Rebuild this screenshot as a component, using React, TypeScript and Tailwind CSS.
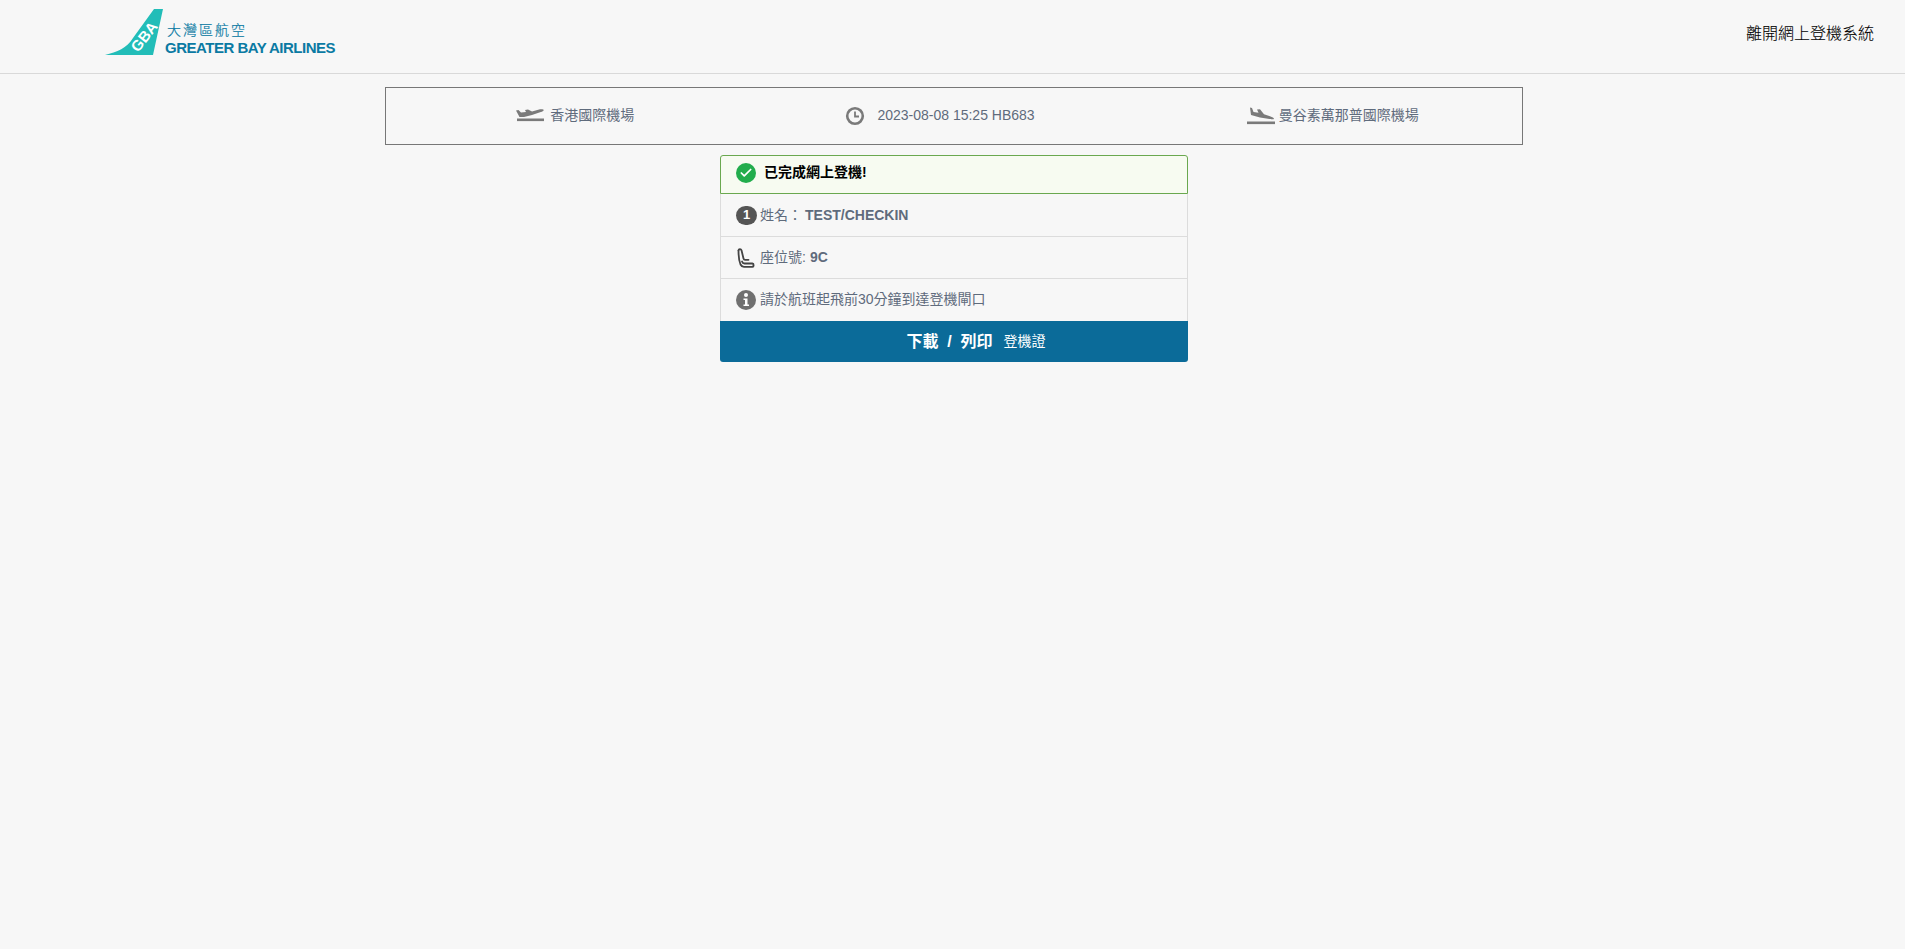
import React from "react";
import { Check } from "lucide-react";

function Logo() {
  return (
    <div className="flex items-end">
      <svg width="60" height="47" viewBox="0 0 60 47" className="block">
        <path d="M49 0H58L48 46H0C12 43 22 39 28 29Z" fill="#22bdb8" />
        <text
          x="0"
          y="0"
          transform="translate(33 44) rotate(-52)"
          fill="#fff"
          fontSize="15"
          fontWeight="700"
          fontFamily="'Liberation Sans', sans-serif"
        >
          GBA
        </text>
      </svg>
      <div className="flex flex-col -translate-y-[1px] text-[#0b7aa3]">
        <span className="text-[14px] leading-[18px] tracking-[2px] pl-[2px] pb-[2px] font-light [-webkit-text-stroke:0.2px_#0b7aa3] font-['Noto_Sans_CJK_TC',sans-serif]">大灣區航空</span>
        <span className="text-[15px] leading-[15px] font-bold font-['Liberation_Sans',sans-serif] tracking-[-0.5px]">GREATER BAY AIRLINES</span>
      </div>
    </div>
  );
}

function Takeoff() {
  return (
    <svg width="28" height="14" viewBox="0 0 28 14" className="block" fill="#7a7a7a">
      <path d="M0 1.5L2.5 1l2.5 2.5 5-.5-1-2 3-.5 4 2L24 .3c1.8-.3 3.7 0 3.8.6.1.7-1.2 1.5-3 2.2L16 6 8 8H3.5z" />
      <rect x="1" y="9.5" width="27" height="2.6" />
    </svg>
  );
}

function Landing() {
  return (
    <svg width="28" height="18" viewBox="0 0 28 18" className="block" fill="#7a7a7a">
      <path d="M3 0.5L5 1l1.500 4 5 .8L10 2.500l3-.3 4 5 6 2c2.500.8 4 1.800 4 2.500 0 .6-2 .7-4.500.4L13 10.500 4 8z" />
      <rect x="0" y="14.500" width="28" height="2.600" />
    </svg>
  );
}

function Clock() {
  return (
    <svg width="20" height="20" viewBox="0 0 20 20" className="block" fill="none" stroke="#7a7a7a">
      <circle cx="10" cy="10" r="7.8" strokeWidth="2.6" />
      <path d="M10 5.5V10.5H14" strokeWidth="1.8" />
    </svg>
  );
}

function Seat() {
  return (
    <svg width="18" height="20" viewBox="0 0 18 20" className="block" fill="none" stroke="#444" strokeWidth="1.8" strokeLinejoin="round" strokeLinecap="round">
      <path d="M1.500 2.500C1.700.8 4 .8 4.500 2.300L6.500 10.500C6.700 11.300 7.200 11.800 8 11.800H11.500" />
      <path d="M1.500 2.500C1.500 7 2 13 3.500 16.500C4.200 18 5.200 18.800 7 18.800H15.500C17 18.800 17 15.500 15.500 15.500H7.500C6 15.500 5.400 14.800 5 13.500" />
    </svg>
  );
}

function Info() {
  return (
    <svg width="20" height="20" viewBox="0 0 20 20" className="block">
      <circle cx="10" cy="10" r="10" fill="#707070" />
      <circle cx="10" cy="5" r="2" fill="#fff" />
      <path d="M7.500 8.500H11.500V14.500H13V16H7.500V14.500H9V10H7.500Z" fill="#fff" />
    </svg>
  );
}

export default function App() {
  return (
    <div className="min-h-[949px] bg-[#f7f7f7] text-[14px] text-[#5f6b7c] font-['Liberation_Sans','Noto_Sans_CJK_TC',sans-serif]">
      <header className="h-[74px] flex justify-between border-b border-[#d9d9d9] pl-[105px] pr-[31px]">
        <div className="pt-[9px]">
          <Logo />
        </div>
        <a className="mt-[23px] text-[16px] leading-[22px] font-light [-webkit-text-stroke:0.1px_#000] text-black">離開網上登機系統</a>
      </header>

      <main className="pl-[3px]">
        <div className="mx-auto mt-[13px] w-[1138px] h-[58px] border border-[#777] grid grid-cols-3 items-center">
          <div className="flex items-center justify-center gap-[6px]">
            <Takeoff />
            <span className="pb-[2px]">香港國際機場</span>
          </div>
          <div className="flex items-center justify-center gap-[12px] pr-[28px]">
            <Clock />
            <span className="pb-[2px]">2023-08-08 15:25 HB683</span>
          </div>
          <div className="flex items-center justify-center gap-[4px]">
            <Landing />
            <span className="pb-[2px]">曼谷素萬那普國際機場</span>
          </div>
        </div>

        <div className="mx-auto mt-[10px] w-[468px]">
          <div className="h-[39px] flex items-center gap-[8px] pl-[15px] pb-[4px] bg-[#f7fbf1] border border-[#6aa84f] rounded-t-[3px] text-black font-bold">
            <span className="w-[20px] h-[20px] rounded-full bg-[#22ad4c] flex items-center justify-center">
              <Check size={14} strokeWidth={3} color="#fff" />
            </span>
            <span>已完成網上登機!</span>
          </div>
          <div className="border-x border-[#dcdcdc]">
            <div className="h-[43px] flex items-center pl-[15px] border-b border-[#dcdcdc]">
              <span className="w-[21px] h-[19px] rounded-full bg-[#555] text-white text-[13px] font-bold flex items-center justify-center mr-[3px]">1</span>
              <span>姓名：</span>
              <b className="ml-[3px]">TEST/CHECKIN</b>
            </div>
            <div className="h-[42px] flex items-center pl-[16px] border-b border-[#dcdcdc]">
              <span className="mr-[5px]"><Seat /></span>
              <span>座位號: </span>
              <b className="ml-[4px]">9C</b>
            </div>
            <div className="h-[42px] flex items-center gap-[4px] pl-[15px] pb-[1px]">
              <Info />
              <span>請於航班起飛前30分鐘到達登機閘口</span>
            </div>
          </div>
          <button className="w-full h-[41px] pl-[44px] bg-[#0b6b99] text-white rounded-b-[3px] flex items-center justify-center gap-[11px] font-bold">
            <span className="text-[16px]">下載 &nbsp;/&nbsp; 列印</span>
            <span className="text-[14px] font-normal">登機證</span>
          </button>
        </div>
      </main>
    </div>
  );
}
